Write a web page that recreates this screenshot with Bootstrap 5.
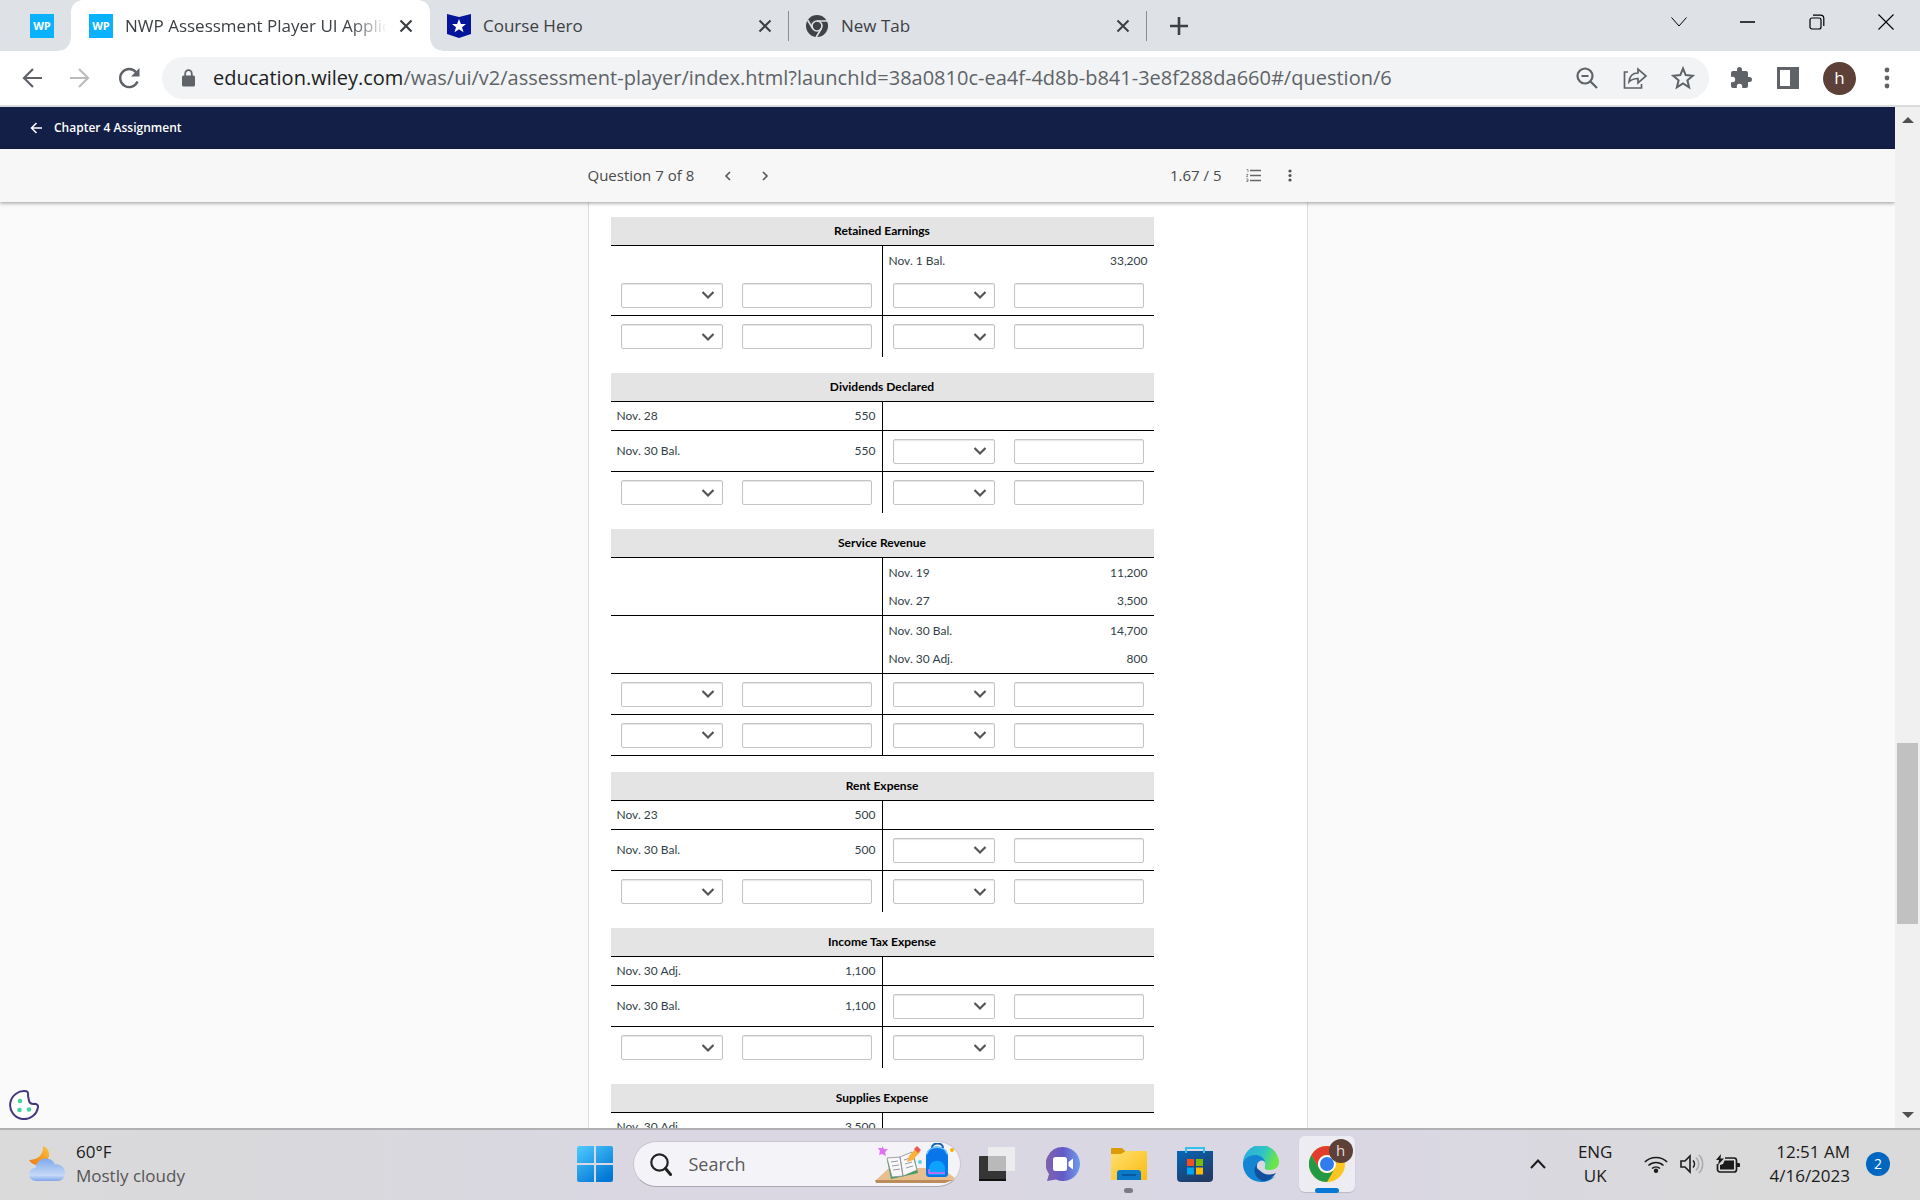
<!DOCTYPE html>
<html lang="en">
<head>
<meta charset="utf-8">
<meta name="viewport" content="width=device-width, initial-scale=1">
<title>NWP Assessment Player UI Application</title>
<link rel="stylesheet" href="https://cdn.jsdelivr.net/npm/bootstrap@5.3.0/dist/css/bootstrap.min.css">
<style>
  body { font-family: "Open Sans", "Noto Sans", sans-serif; color: #3c4043; }
  button { font: inherit; color: inherit; background: none; border: 0; padding: 0; }
  svg { display: block; flex: none; }
  .shell { height: 100vh; overflow: hidden; }

  /* browser tabs */
  .tabstrip { height: 51px; background: #dee1e6; font-size: 17px; }
  .tab { height: 51px; gap: 12px; }
  .tab-pinned { width: 71px; padding-left: 30px; }
  .tab-active { width: 359px; padding: 0 17px 0 18px; background: #fff; border-radius: 12px 12px 0 0; }
  .tab-active::before, .tab-active::after { content: ""; position: absolute; bottom: 0; width: 12px; height: 12px; }
  .tab-active::before { left: -12px; background: radial-gradient(circle at 0 0, transparent 11px, #fff 12px); }
  .tab-active::after { right: -12px; background: radial-gradient(circle at 100% 0, transparent 11px, #fff 12px); }
  .tab-idle { width: 358px; padding: 0 16px 0 17px; }
  .tab-idle + .tab-idle::before, .tab-end::before { content: ""; width: 1px; height: 30px; background: #8a8d91; position: absolute; left: 0; top: 11px; }
  .tab-title { line-height: 24px; overflow: hidden; }
  .tab-active .tab-title { mask-image: linear-gradient(90deg, #000 86%, transparent); -webkit-mask-image: linear-gradient(90deg, #000 86%, transparent); }
  .favicon { width: 24px; height: 24px; background: #0ab2fe; color: #fff; font: bold 11px/24px "Open Sans", sans-serif; text-align: center; flex: none; }
  .winbtn { width: 69px; height: 44px; color: #000; }

  /* address bar */
  .toolbar { height: 56px; border-bottom: 2px solid #dadbdc; background: #fff; padding: 0 26px 0 20px; color: #5f6368; }
  .omnibox { min-width: 0; height: 42px; border-radius: 21px; background: #f1f3f4; padding: 0 14px 0 20px; margin: 0 20px 0 20px; }
  .address { min-width: 0; font-size: 20px; line-height: 26px; color: #5f6368; margin-left: 18px; }
  .address b { font-weight: 400; color: #202124; }
  .avatar { width: 33px; height: 33px; border-radius: 50%; background: #5d4037; color: #fff; font-size: 17px; }

  /* page */
  .page { background: #fafafa; }
  .coursebar { height: 42px; background: #131f46; padding-left: 30px; }
  .coursebar a { color: #fff; font-size: 12px; font-weight: 600; line-height: 18px; gap: 12px; }
  .questionbar { height: 53px; background: #f7f7f7; box-shadow: 0 1px 4px rgba(0,0,0,.4); z-index: 1; font-size: 15px; color: #4a4a4a; }
  .sheet { width: 720px; max-width: 100%; }
  .paper { background: #fff; border: solid #dcdcdc; border-width: 0 1px; padding: 15px 22px 0; }
  .ledger { width: 543px; max-width: 100%; margin-bottom: 16px; table-layout: fixed; border-collapse: separate; border-spacing: 0; font: 12px/18px Lato, sans-serif; color: #333f48; }
  .ledger caption { caption-side: top; height: 29px; padding: 5px 0; background: #e4e4e4; border-bottom: 1px solid #000; color: #000; font-weight: 700; text-align: center; }
  .ledger .col-date { width: 122px; }
  .ledger .col-date-credit { width: 123px; }
  .ledger td { height: 29px; padding: 0 6px; vertical-align: middle; }
  .ledger td:nth-child(3) { border-left: 1px solid #000; }
  .ledger .ruled td { border-bottom: 1px solid #000; }
  .ledger .entry td { height: 41px; }
  .ledger td.field { padding: 0 10px; }
  .ledger td.field + td.field:nth-child(even) { padding-left: 9px; }
  .ledger .form-select, .ledger .form-control { height: 25px; min-height: 0; padding: 0 4px; font-size: 12px; border: 1px solid #c4c4c4; border-radius: 2px; box-shadow: inset 0 1px 1px rgba(0,0,0,.1); }
  .ledger .form-select { padding-right: 24px; background: #fff url("data:image/svg+xml,%3Csvg xmlns='http://www.w3.org/2000/svg' viewBox='0 0 14 10'%3E%3Cpath d='M1.5 2l5.500 5.500L12.500 2' fill='none' stroke='%23555' stroke-width='2.200'/%3E%3C/svg%3E") no-repeat right 7px center / 14px 10px; }
  .cookie { position: absolute; left: 9px; bottom: 8px; }

  .scroller { width: 25px; background: #f0f0f0; }
  .scroller button { height: 26px; }
  .thumb { width: 21px; background: #c1c1c1; }

  /* taskbar */
  .taskbar { height: 72px; padding-bottom: 2px; border-top: 2px solid #b0b0b2; background: linear-gradient(90deg, #dadadb 0, #d9d9dd 18%, #dad7e3 34%, #dad7e4 70%, #dadada 92%); font-size: 17px; color: #1b1b1b; }
  .weather { padding-left: 29px; gap: 11px; line-height: 24px; }
  .weather-note { color: #555; }
  .start { width: 60px; }
  .search { width: 328px; height: 46px; border-radius: 23px; border: 1px solid #c9c6d0; border-bottom-color: #aaa8b0; background: #f4f3f8; padding: 0 3px 0 16px; }
  .search input { min-width: 0; border: 0; background: none; outline: 0; font-size: 18px; color: #555; padding: 0 0 0 17px; }
  .search input::placeholder { color: #5a5a5a; opacity: 1; }
  .apps { gap: 10px; }
  .app { width: 56px; height: 56px; border-radius: 6px; position: relative; }
  .app-on { background: #edecf2; box-shadow: 0 1px 1px #bbb8c4; }
  .running { position: absolute; left: 0; right: 0; margin: 0 auto; bottom: -1px; height: 5px; width: 9px; border-radius: 3px; background: #7e7b84; }
  .app-on .running { width: 24px; background: #0878d6; }
  .app-badge { position: absolute; right: 2px; top: 3px; width: 24px; height: 24px; border-radius: 50%; background: #5d4037; color: #e8dcd8; font-size: 15px; line-height: 22px; }
  .taskbar-side { flex: 1 1 0; }
  .tray { padding-right: 30px; line-height: 24px; }
  .clock { margin-left: 29px; }
  .count { width: 24px; height: 24px; border-radius: 50%; background: #0067c0; color: #fff; font-size: 14px; line-height: 24px; }
</style>
</head>
<body>
<div class="shell d-flex flex-column">

  <div class="tabstrip d-flex flex-shrink-0">
    <div class="tab tab-pinned d-flex align-items-center"><span class="favicon">WP</span></div>
    <div class="tab tab-active position-relative d-flex align-items-center">
      <span class="favicon">WP</span><span class="tab-title flex-fill text-nowrap">NWP Assessment Player UI Application</span>
      <button aria-label="Close tab"><svg width="14" height="14" viewBox="0 0 14 14"><path d="M1.500 1.500l11 11m0-11l-11 11" stroke="#3c4043" stroke-width="2.200"/></svg></button>
    </div>
    <div class="tab tab-idle position-relative d-flex align-items-center">
      <svg width="24" height="24" viewBox="0 0 24 24"><path d="M0 0l12 3 12-3v20l-12 4L0 20z" fill="#04159a"/><path d="M12 5l1.900 5H19l-4 3.200 1.500 5L12 15.200 7.500 18.200l1.500-5L5 10h5.100z" fill="#fff"/></svg>
      <span class="tab-title flex-fill text-nowrap">Course Hero</span>
      <button aria-label="Close tab"><svg width="14" height="14" viewBox="0 0 14 14"><path d="M1.500 1.500l11 11m0-11l-11 11" stroke="#3c4043" stroke-width="2"/></svg></button>
    </div>
    <div class="tab tab-idle position-relative d-flex align-items-center">
      <svg width="24" height="24" viewBox="0 0 24 24"><circle cx="12" cy="12" r="11" fill="#3f4347"/><circle cx="12" cy="12" r="5" fill="none" stroke="#dee1e6" stroke-width="1.600"/><path d="M12 7h10M7.700 14.500L2.600 6M16.300 14.500L11.300 23" stroke="#dee1e6" stroke-width="1.600"/></svg>
      <span class="tab-title flex-fill text-nowrap">New Tab</span>
      <button aria-label="Close tab"><svg width="14" height="14" viewBox="0 0 14 14"><path d="M1.500 1.500l11 11m0-11l-11 11" stroke="#3c4043" stroke-width="2"/></svg></button>
    </div>
    <div class="tab tab-end position-relative d-flex align-items-center ps-4">
      <button aria-label="New tab"><svg width="18" height="18" viewBox="0 0 18 18"><path d="M9 0v18M0 9h18" stroke="#3c4043" stroke-width="2.600"/></svg></button>
    </div>
    <div class="ms-auto d-flex">
      <button class="winbtn d-flex align-items-center justify-content-center" aria-label="Search tabs"><svg width="16" height="10" viewBox="0 0 16 10"><path d="M.5.500l7.500 8.500L15.500.500" fill="none" stroke="currentColor" stroke-width="1"/></svg></button>
      <button class="winbtn d-flex align-items-center justify-content-center" aria-label="Minimize"><svg width="15" height="2"><path d="M0 1h15" stroke="currentColor" stroke-width="1.500"/></svg></button>
      <button class="winbtn d-flex align-items-center justify-content-center" aria-label="Restore"><svg width="16" height="16" viewBox="0 0 16 16" fill="none" stroke="currentColor" stroke-width="1.200"><rect x="1" y="4" width="11" height="11" rx="2"/><path d="M4 1.200h7.500a3.300 3.300 0 0 1 3.300 3.300V12"/></svg></button>
      <button class="winbtn d-flex align-items-center justify-content-center" aria-label="Close"><svg width="16" height="16" viewBox="0 0 16 16"><path d="M.5.500l15 15m0-15l-15 15" stroke="currentColor" stroke-width="1.100"/></svg></button>
    </div>
  </div>

  <div class="toolbar d-flex align-items-center flex-shrink-0">
    <div class="d-flex gap-4">
      <button aria-label="Back"><svg width="24" height="24" viewBox="0 0 24 24"><path d="M22 12H4m9-9l-9 9 9 9" fill="none" stroke="#5f6368" stroke-width="2.200"/></svg></button>
      <button aria-label="Forward"><svg width="24" height="24" viewBox="0 0 24 24"><path d="M2 12h18m-9-9l9 9-9 9" fill="none" stroke="#babcbe" stroke-width="2.200"/></svg></button>
      <button aria-label="Reload"><svg width="26" height="24" viewBox="0 0 26 24"><path d="M21.500 15.500A9 9 0 1 1 20 6.200" fill="none" stroke="#5f6368" stroke-width="2.400"/><path d="M23.500 2v8.500H15z" fill="#5f6368"/></svg></button>
    </div>
    <div class="omnibox d-flex align-items-center flex-fill">
      <svg width="13" height="18" viewBox="0 0 13 18"><path d="M1.500 6.500h10A1.500 1.500 0 0 1 13 8v8a1.500 1.500 0 0 1-1.500 1.500h-10A1.500 1.500 0 0 1 0 16V8a1.500 1.500 0 0 1 1.500-1.500z" fill="#5f6368"/><path d="M3.200 7V4.400a3.300 3.300 0 0 1 6.600 0V7" fill="none" stroke="#5f6368" stroke-width="1.700"/></svg>
      <div class="address flex-fill text-nowrap overflow-hidden"><b>education.wiley.com</b>/was/ui/v2/assessment-player/index.html?launchId=38a0810c-ea4f-4d8b-b841-3e8f288da660#/question/6</div>
      <div class="d-flex gap-4">
        <button aria-label="Zoom"><svg width="24" height="24" viewBox="0 0 24 24" fill="none" stroke="#5f6368" stroke-width="2.200"><circle cx="10" cy="10" r="7.500"/><path d="M15.500 15.500L22 22M6.500 10h7"/></svg></button>
        <button aria-label="Share"><svg width="24" height="24" viewBox="0 0 24 24" fill="none" stroke="#5f6368" stroke-width="1.700"><path d="M5 6H1.500v16h17v-4"/><path d="M6 16c.5-6 4-9 9-9V3l8 7-8 7v-4.500c-4 0-6.500 1-9 3.500z"/></svg></button>
        <button aria-label="Bookmark"><svg width="24" height="24" viewBox="0 0 24 24"><path d="M12 2.500l2.700 6.600 7.100.6-5.400 4.600 1.700 7L12 17.500l-6.100 3.800 1.700-7-5.400-4.600 7.100-.6z" fill="none" stroke="#5f6368" stroke-width="2"/></svg></button>
      </div>
    </div>
    <div class="d-flex align-items-center gap-4">
      <button aria-label="Extensions"><svg width="24" height="24" viewBox="0 0 24 24"><path d="M20.500 11H19V7a2 2 0 0 0-2-2h-4V3.500a2.500 2.500 0 0 0-5 0V5H4a2 2 0 0 0-2 2v3.800h1.500a2.700 2.700 0 0 1 0 5.400H2V20a2 2 0 0 0 2 2h3.800v-1.500a2.700 2.700 0 0 1 5.400 0V22H17a2 2 0 0 0 2-2v-4h1.500a2.500 2.500 0 0 0 0-5z" fill="#5f6368"/></svg></button>
      <button aria-label="Side panel"><svg width="22" height="22" viewBox="0 0 22 22"><path d="M0 0h22v22H0zM3 3v16h10V3z" fill="#5f6368" fill-rule="evenodd"/></svg></button>
      <button class="avatar" aria-label="Profile">h</button>
      <button aria-label="Menu"><svg width="14" height="22" viewBox="0 0 14 22" fill="#5f6368"><circle cx="7" cy="3" r="2.400"/><circle cx="7" cy="11" r="2.400"/><circle cx="7" cy="19" r="2.400"/></svg></button>
    </div>
  </div>

  <div class="d-flex flex-fill overflow-hidden">
    <div class="page flex-fill d-flex flex-column position-relative overflow-hidden">
      <nav class="coursebar d-flex align-items-center flex-shrink-0">
        <a href="#" class="d-flex align-items-center text-decoration-none"><svg width="12" height="12" viewBox="0 0 12 12"><path d="M12 6H1.500M6.500 1l-5 5 5 5" fill="none" stroke="#fff" stroke-width="1.500"/></svg>Chapter 4 Assignment</a>
      </nav>
      <div class="questionbar flex-shrink-0 d-flex justify-content-center align-items-center">
        <div class="sheet d-flex align-items-center">
          <span>Question 7 of 8</span>
          <button aria-label="Previous question" class="ms-4 px-1"><svg width="12" height="10" viewBox="0 0 12 10"><path d="M8 1L4 5l4 4" fill="none" stroke="#555" stroke-width="1.600"/></svg></button>
          <button aria-label="Next question" class="ms-3 px-1"><svg width="14" height="10" viewBox="0 0 14 10"><path d="M5 1l4 4-4 4" fill="none" stroke="#555" stroke-width="1.600"/></svg></button>
          <span class="ms-auto me-4">1.67 / 5</span>
          <button aria-label="Question list" class="me-4"><svg width="16" height="13" viewBox="0 0 16 13"><path d="M4 1.500h11M4 6.500h11M4 11.500h11" stroke="#666" stroke-width="1.500"/><path d="M.5.500H2v2.500M.3 5.300H2L.4 7.700H2M.3 10H2v2.500H.3M.8 11.300H2" fill="none" stroke="#777" stroke-width=".8"/></svg></button>
          <button aria-label="More" class="me-3"><svg width="6" height="13" viewBox="0 0 6 13" fill="#555"><circle cx="4" cy="2" r="1.600"/><circle cx="4" cy="6.500" r="1.600"/><circle cx="4" cy="11" r="1.600"/></svg></button>
        </div>
      </div>
      <main class="sheet paper mx-auto flex-fill overflow-hidden" id="ledgers"></main>
      <button class="cookie" aria-label="Cookie settings"><svg width="30" height="30" viewBox="0 0 30 30"><path d="M17.500 1.300A14 14 0 1 0 29 17c.3-1.300-1-3-3-3.200-2.500.3-5.500-.5-6-3-.3-2-.5-3-1-4.800.3-2-.2-4.300-1.500-4.700z" fill="#fff" stroke="#43397c" stroke-width="2"/><g fill="#43d39e"><circle cx="11" cy="11" r="2.300"/><circle cx="10.500" cy="20" r="2.300"/><circle cx="20" cy="19.500" r="2.300"/></g></svg></button>
    </div>
    <div class="scroller d-flex flex-column align-items-center flex-shrink-0">
      <button aria-label="Scroll up"><svg width="12" height="6" viewBox="0 0 12 6"><path d="M0 6l6-6 6 6z" fill="#505050"/></svg></button>
      <div style="flex-grow:610"></div>
      <div class="thumb" style="flex-grow:181"></div>
      <div style="flex-grow:178"></div>
      <button aria-label="Scroll down"><svg width="12" height="6" viewBox="0 0 12 6"><path d="M0 0l6 6 6-6z" fill="#505050"/></svg></button>
    </div>
  </div>

  <footer class="taskbar d-flex align-items-center flex-shrink-0">
    <div class="weather taskbar-side d-flex align-items-center">
      <svg width="36" height="36" viewBox="0 0 36 36"><defs><linearGradient id="moon" x1="0" y1="1" x2="1" y2="0"><stop offset="0" stop-color="#ee7712"/><stop offset="1" stop-color="#f8c53a"/></linearGradient><linearGradient id="cloud" x1="0" y1="0" x2="0" y2="1"><stop offset="0" stop-color="#7fa8ec"/><stop offset=".75" stop-color="#c5d9f7"/><stop offset="1" stop-color="#7ea5ea"/></linearGradient></defs><path d="M14 0c8 3 8 13 1 17-5 4-12 2-15-3 8 0 15-5 14-14z" fill="url(#moon)"/><path d="M7.500 35C3 35 0 32 0 28.300 0 24.500 3 22 6.500 22 7.500 16 11.500 12.500 16.500 12.500c5 0 8 2.500 9.500 6 5-1 10 3 10 8.500 0 4.500-3 8-8 8z" fill="url(#cloud)"/></svg>
      <div class="d-flex flex-column"><span>60°F</span><span class="weather-note">Mostly cloudy</span></div>
    </div>
    <div class="d-flex align-items-center">
      <button class="start d-flex justify-content-center" aria-label="Start"><svg width="36" height="36" viewBox="0 0 36 36"><defs><linearGradient id="win" x1="0" y1="0" x2=".7" y2="1"><stop offset="0" stop-color="#4fcbff"/><stop offset="1" stop-color="#0277d4"/></linearGradient></defs><path d="M2 0h15v17H0V2a2 2 0 0 1 2-2zM19 0h15a2 2 0 0 1 2 2v15H19zM0 19h17v17H2a2 2 0 0 1-2-2zM19 19h17v15a2 2 0 0 1-2 2H19z" fill="url(#win)"/></svg></button>
      <div class="search d-flex align-items-center ms-2 ps-3 me-2">
        <svg width="22" height="23" viewBox="0 0 22 23"><circle cx="9.500" cy="9.500" r="8.200" fill="none" stroke="#222" stroke-width="2.200"/><path d="M15.500 15.500l5 6" stroke="#222" stroke-width="3" stroke-linecap="round"/></svg>
        <input class="flex-fill" type="text" placeholder="Search" aria-label="Search">
        <svg width="82" height="42" viewBox="0 0 82 42"><path d="M0 38l14-13h52l14 10-2 3z" fill="#e6be90"/><path d="M0 37h78l-8 3H1z" fill="#bb8d5c"/><path d="M7 3l2 3 4 0-3 3 1 4-4-2-3 1 1-4-2-3 4 0z" fill="#df72f5"/><path d="M12 17l27-5 4 18-27 6z" fill="#39a35a"/><path d="M12 15l13-1 3 19-11 1zM25 14l12-5 5 18-14 6z" fill="#f8f8f8" stroke="#8c8c96" stroke-width=".8"/><path d="M16 19l7-1M17 23l7-1M18 27l7-1M29 17l6-2M30 21l7-2M31 25l7-2" stroke="#9a9aa6"/><path d="M32 19l2-6 7-8 4 4-7 8z" fill="#fbb13c"/><path d="M39 6l3-3 4 4-3 3z" fill="#ee5a52"/><circle cx="45" cy="19" r="2" fill="#5fd0e6"/><circle cx="77" cy="7" r="2" fill="#fdb200"/><path d="M57 5c0-6 11-6 11 0" fill="none" stroke="#1263b8" stroke-width="2"/><path d="M51 14c0-14 22-14 22 0v16c0 3-1 4-4 4H55c-3 0-4-1-4-4z" fill="#0876ea"/><path d="M54 26c0-11 16-11 16 0v6H54z" fill="#0ba3fb"/><path d="M52 11c2-9 18-9 20 0" fill="none" stroke="#6cc9fa" stroke-width="1.300"/><path d="M54 26v4h16" fill="none" stroke="#ba6ff3" stroke-width="1.800"/></svg>
      </div>
      <div class="apps d-flex">
        <button class="app d-flex align-items-center justify-content-center" aria-label="Task view"><svg width="36" height="36" viewBox="0 0 36 36"><rect y="10" width="27" height="25" rx="1" fill="#353535"/><rect y="33" width="27" height="2" fill="#111"/><rect x="9" y="1" width="27" height="24" rx="1" fill="#ececee"/><path d="M9 10h18v15H9z" fill="#b9b9b9"/></svg></button>
        <button class="app d-flex align-items-center justify-content-center" aria-label="Chat"><svg width="34" height="36" viewBox="0 0 34 36"><defs><linearGradient id="chat" x1="0" y1=".3" x2="1" y2=".3"><stop offset="0" stop-color="#8162ab"/><stop offset=".5" stop-color="#635ac7"/><stop offset="1" stop-color="#719aeb"/></linearGradient></defs><path d="M17 1a17 17 0 1 1-7 32.500L1 35l2-7A17 17 0 0 1 17 1z" fill="url(#chat)"/><rect x="7" y="11" width="14" height="14" rx="2.500" fill="#fff"/><path d="M22.500 16l4.500-3.500v11L22.500 20z" fill="#fff"/></svg></button>
        <button class="app d-flex align-items-center justify-content-center" aria-label="File Explorer"><svg width="36" height="36" viewBox="0 0 36 36"><defs><linearGradient id="fold" x1="0" y1="0" x2="1" y2="1"><stop offset="0" stop-color="#ffe070"/><stop offset="1" stop-color="#fabb11"/></linearGradient></defs><path d="M0 3a1 1 0 0 1 1-1h10l4 4v8H0z" fill="#dc9c08"/><path d="M0 8h10l5-3h20a1 1 0 0 1 1 1v28H0z" fill="url(#fold)"/><path d="M6 34V27a3 3 0 0 1 3-3h18a3 3 0 0 1 3 3v7z" fill="#0b79c9"/><path d="M11 29h14" stroke="#07518e" stroke-width="1.500"/></svg><span class="running"></span></button>
        <button class="app d-flex align-items-center justify-content-center" aria-label="Microsoft Store"><svg width="36" height="36" viewBox="0 0 36 36"><defs><linearGradient id="store" x1="0" y1="0" x2=".6" y2="1"><stop offset="0" stop-color="#0667b7"/><stop offset="1" stop-color="#213b66"/></linearGradient></defs><path d="M0 5h36v27a4 4 0 0 1-4 4H4a4 4 0 0 1-4-4z" fill="url(#store)"/><path d="M9 7V2h18v5" fill="none" stroke="#31c1ef" stroke-width="2"/><path d="M10 13h7v7h-7z" fill="#f25022"/><path d="M19 13h7v7h-7z" fill="#7fba00"/><path d="M10 21.500h7v7h-7z" fill="#00a4ef"/><path d="M19 21.500h7v7h-7z" fill="#ffb900"/></svg></button>
        <button class="app d-flex align-items-center justify-content-center" aria-label="Microsoft Edge"><svg width="36" height="36" viewBox="0 0 36 36"><defs><linearGradient id="edgeTop" x1="0" y1="0" x2="1" y2=".3"><stop offset="0" stop-color="#2aa9df"/><stop offset=".6" stop-color="#2fc4c6"/><stop offset="1" stop-color="#6ce549"/></linearGradient></defs><path d="M0 18A18 18 0 0 1 36 16c0 5-4 8-9 8-4 0-6-1-5-3 1-8-13-11-22-3z" fill="url(#edgeTop)"/><path d="M0 17C3 7 20 6 22 16c-8-5-10 8-2 14 4 3 9 2 12 0-3 4-8 6-14 6A18 18 0 0 1 0 17z" fill="#1385d2"/><path d="M14 18c-6 7 0 17 8 17 5-1 9-5 11-8-6 3-14 2-18-5z" fill="#10509c"/><path d="M14 19c1-5 7-6 8-2 1 3-2 4 0 6-5 2-9 1-8-4z" fill="#dad7e4"/></svg></button>
        <button class="app app-on d-flex align-items-center justify-content-center" aria-label="Google Chrome"><svg width="36" height="36" viewBox="0 0 36 36"><circle cx="18" cy="18" r="18" fill="#fcc51f"/><path d="M18 0A18 18 0 0 1 33.600 9H18a9 9 0 0 0-7.800 13.500L2.400 9A18 18 0 0 1 18 0z" fill="#e33b2e"/><path d="M2.400 9l7.800 13.500A9 9 0 0 0 25.800 22.500L18 36A18 18 0 0 1 2.400 9z" fill="#229a45"/><circle cx="18" cy="18" r="9" fill="#fff"/><circle cx="18" cy="18" r="7" fill="#2f7cee"/></svg><span class="app-badge">h</span><span class="running"></span></button>
      </div>
    </div>
    <div class="tray taskbar-side d-flex align-items-center justify-content-end">
      <button aria-label="Show hidden icons"><svg width="16" height="10" viewBox="0 0 16 10"><path d="M1 9l7-7.500L15 9" fill="none" stroke="#1b1b1b" stroke-width="2"/></svg></button>
      <div class="text-center px-4 mx-2"><div>ENG</div><div>UK</div></div>
      <div class="d-flex align-items-center gap-2">
        <svg width="28" height="18" viewBox="0 0 28 18" fill="none" stroke="#1b1b1b" stroke-width="1.600"><path d="M.8 7a16 16 0 0 1 22.400 0M4.500 10.500a11 11 0 0 1 15 0M8 13.500a6 6 0 0 1 8 0"/><circle cx="12" cy="15.800" r="1.400" fill="#1b1b1b"/></svg>
        <svg width="28" height="20" viewBox="0 0 28 20" fill="none" stroke="#1b1b1b" stroke-width="1.600"><path d="M1 7h4l5-5v16l-5-5H1zM13 6.500a5 5 0 0 1 0 7"/><path d="M16 3.500a9 9 0 0 1 0 13M19 1a13 13 0 0 1 0 18" stroke="#aaa"/></svg>
        <svg width="24" height="20" viewBox="0 0 24 20"><path d="M9 4h9a2.500 2.500 0 0 1 2.500 2.500v9A2.500 2.500 0 0 1 18 18H4a2.500 2.500 0 0 1-2.500-2.500V10" fill="none" stroke="#1b1b1b" stroke-width="1.700"/><path d="M8.500 6.500H18v9H4V11l3-1z" fill="#1b1b1b"/><path d="M21 9h1.500a1.500 1.500 0 0 1 0 4H21z" fill="#1b1b1b"/><path d="M5 0L0 6h3L2 11l6-6.500H4.500z" fill="#1b1b1b"/></svg>
      </div>
      <div class="clock text-end"><div>12:51 AM</div><div>4/16/2023</div></div>
      <button class="count ms-3" aria-label="Notifications">2</button>
    </div>
  </footer>
</div>

<script>
  // Each row: left side, right side, rule below. A side is [label, amount], "entry" for the two controls, or null when blank.
  const accounts = [
    ["Retained Earnings", [[null, ["Nov. 1 Bal.", "33,200"], 0], ["entry", "entry", 1], ["entry", "entry", 0]]],
    ["Dividends Declared", [[["Nov. 28", "550"], null, 1], [["Nov. 30 Bal.", "550"], "entry", 1], ["entry", "entry", 0]]],
    ["Service Revenue", [[null, ["Nov. 19", "11,200"], 0], [null, ["Nov. 27", "3,500"], 1], [null, ["Nov. 30 Bal.", "14,700"], 0], [null, ["Nov. 30 Adj.", "800"], 1], ["entry", "entry", 1], ["entry", "entry", 1]]],
    ["Rent Expense", [[["Nov. 23", "500"], null, 1], [["Nov. 30 Bal.", "500"], "entry", 1], ["entry", "entry", 0]]],
    ["Income Tax Expense", [[["Nov. 30 Adj.", "1,100"], null, 1], [["Nov. 30 Bal.", "1,100"], "entry", 1], ["entry", "entry", 0]]],
    ["Supplies Expense", [[["Nov. 30 Adj.", "3,500"], null, 1]]]
  ];
  const side = (s, name) => s === "entry"
    ? `<td class="field"><select class="form-select" aria-label="${name} date"><option></option></select></td><td class="field"><input class="form-control" type="text" aria-label="${name} amount"></td>`
    : s ? `<td>${s[0]}</td><td class="text-end">${s[1]}</td>` : "<td></td><td></td>";
  document.getElementById("ledgers").innerHTML = accounts.map(([title, rows]) =>
    `<table class="ledger"><caption>${title}</caption><colgroup><col class="col-date"><col><col class="col-date-credit"><col></colgroup><tbody>` +
    rows.map(([l, r, rule]) => `<tr class="${rule ? "ruled " : ""}${l === "entry" || r === "entry" ? "entry" : ""}">${side(l, title + " debit")}${side(r, title + " credit")}</tr>`).join("") +
    "</tbody></table>").join("");
</script>
<script src="https://cdn.jsdelivr.net/npm/bootstrap@5.3.0/dist/js/bootstrap.bundle.min.js"></script>
</body>
</html>
